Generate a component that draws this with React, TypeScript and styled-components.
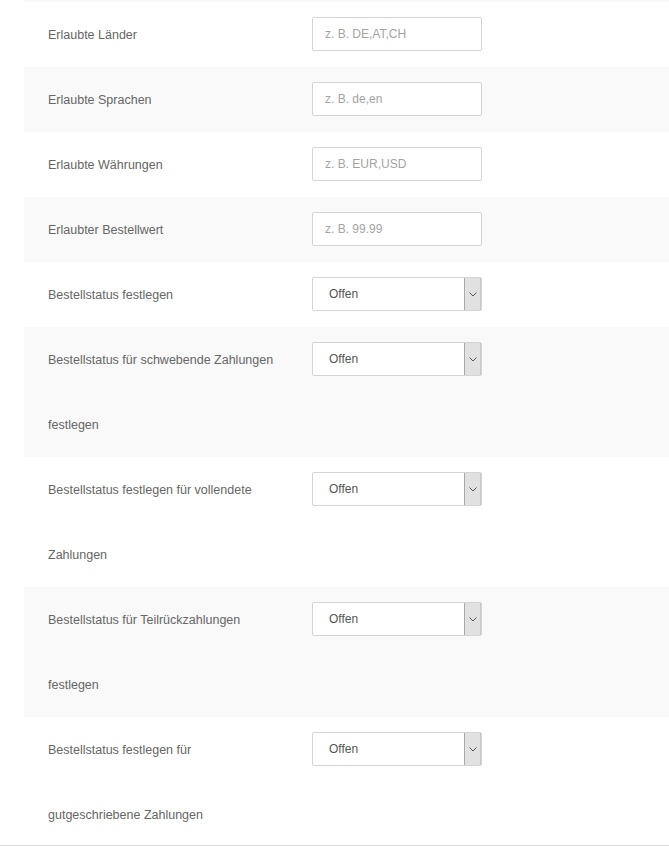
import React from "react";
import styled, { createGlobalStyle } from "styled-components";

const Global = createGlobalStyle`
  html, body { margin: 0; padding: 0; background: #fff; }
  body { font-family: "Liberation Sans", Arial, sans-serif; }
`;

const Page = styled.div`
  width: 669px;
  height: 847px;
  overflow: hidden;
  background: #fff;
`;

const TopBand = styled.div`
  height: 2px;
  margin-left: 24px;
  background: #f9f9f9;
`;

const List = styled.div`
  display: flex;
  flex-direction: column;
  border-bottom: 1px solid #dedede;
`;

const Row = styled.div<{ $alt?: boolean; $h?: number }>`
  display: grid;
  grid-template-columns: 288px 1fr;
  margin-left: 24px;
  background: ${(p) => (p.$alt ? "#f9f9f9" : "#fff")};
  ${(p) => (p.$h ? `height: ${p.$h}px; overflow: hidden;` : "")}
`;

const Label = styled.div`
  padding-left: 24px;
  padding-top: 1px;
  margin-bottom: -1px;
  font-size: 12.5px;
  line-height: 65px;
  color: #666;
`;

const Field = styled.div`
  padding-top: 15px;
`;

const TextInput = styled.input`
  box-sizing: border-box;
  display: block;
  width: 170px;
  height: 34px;
  padding: 0 12px;
  border: 1px solid #d4d4d4;
  border-radius: 2px;
  background: #fff;
  font-family: "Liberation Sans", Arial, sans-serif;
  font-size: 12px;
  color: #555;
  outline: none;
  &::placeholder { color: #a3a3a3; }
`;

const SelectBox = styled.div`
  box-sizing: border-box;
  display: flex;
  align-items: stretch;
  width: 170px;
  height: 34px;
  border: 1px solid #d4d4d4;
  border-radius: 2px;
  background: #fff;
`;

const SelectValue = styled.span`
  flex: 1;
  padding-left: 16px;
  font-size: 12px;
  line-height: 32px;
  color: #555;
`;

const Arrow = styled.span`
  box-sizing: border-box;
  width: 17px;
  display: flex;
  align-items: center;
  justify-content: center;
  background: #e1e1e1;
  border-left: 1px solid #a9a9a9;
  border-right: 1px solid #c8c8c8;
`;

const Select = ({ value }: { value: string }) => (
  <SelectBox>
    <SelectValue>{value}</SelectValue>
    <Arrow>
      <svg width="8" height="5" viewBox="0 0 8 5">
        <path d="M0.5 0.5 L4 4 L7.5 0.5" fill="none" stroke="#555" strokeWidth="1" />
      </svg>
    </Arrow>
  </SelectBox>
);

type Item =
  | { label: string[]; kind: "input"; placeholder: string }
  | { label: string[]; kind: "select"; value: string };

const items: Item[] = [
  { label: ["Erlaubte Länder"], kind: "input", placeholder: "z. B. DE,AT,CH" },
  { label: ["Erlaubte Sprachen"], kind: "input", placeholder: "z. B. de,en" },
  { label: ["Erlaubte Währungen"], kind: "input", placeholder: "z. B. EUR,USD" },
  { label: ["Erlaubter Bestellwert"], kind: "input", placeholder: "z. B. 99.99" },
  { label: ["Bestellstatus festlegen"], kind: "select", value: "Offen" },
  { label: ["Bestellstatus für schwebende Zahlungen", "festlegen"], kind: "select", value: "Offen" },
  { label: ["Bestellstatus festlegen für vollendete", "Zahlungen"], kind: "select", value: "Offen" },
  { label: ["Bestellstatus für Teilrückzahlungen", "festlegen"], kind: "select", value: "Offen" },
  { label: ["Bestellstatus festlegen für", "gutgeschriebene Zahlungen"], kind: "select", value: "Offen" },
];

export default function App() {
  return (
    <Page>
      <Global />
      <TopBand />
      <List>
        {items.map((it, i) => (
          <Row key={i} $alt={i % 2 === 1} $h={i === items.length - 1 ? 128 : undefined}>
            <Label>
              {it.label.map((l, j) => (
                <React.Fragment key={j}>
                  {j > 0 && <br />}
                  {l}
                </React.Fragment>
              ))}
            </Label>
            <Field>
              {it.kind === "input" ? (
                <TextInput placeholder={it.placeholder} />
              ) : (
                <Select value={it.value} />
              )}
            </Field>
          </Row>
        ))}
      </List>
    </Page>
  );
}
